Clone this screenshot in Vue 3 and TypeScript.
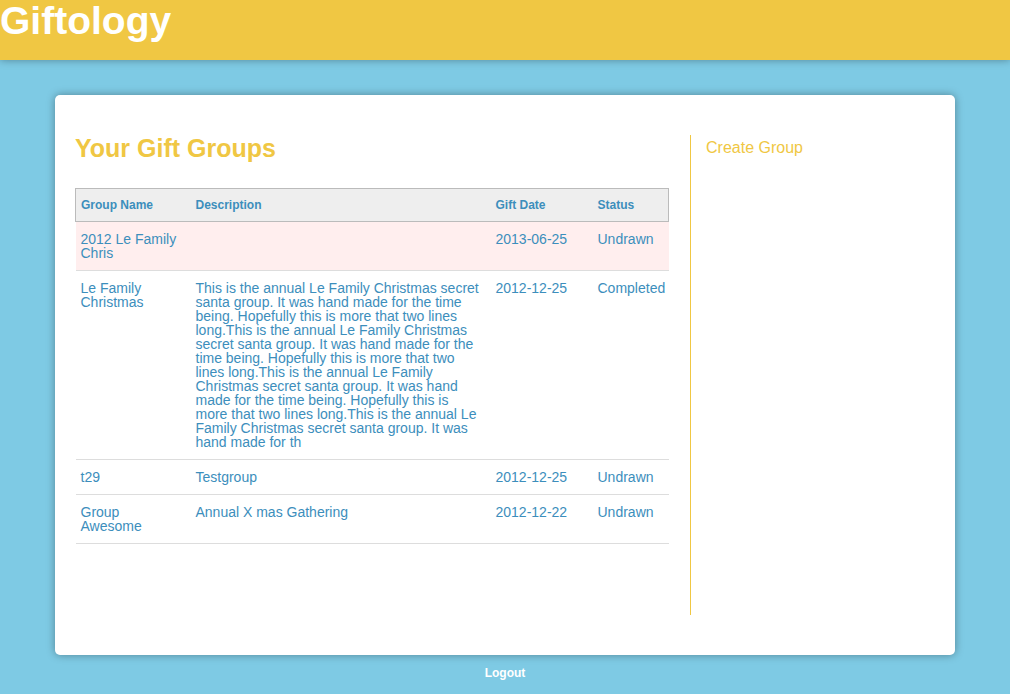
<script setup lang="ts">
interface GiftGroup {
  name: string
  description: string
  date: string
  status: string
  highlighted?: boolean
}

const blurb =
  'This is the annual Le Family Christmas secret santa group. It was hand made for the time being. Hopefully this is more that two lines long.'

const groups: GiftGroup[] = [
  { name: '2012 Le Family Chris', description: '', date: '2013-06-25', status: 'Undrawn', highlighted: true },
  {
    name: 'Le Family Christmas',
    description: blurb.repeat(3) + 'This is the annual Le Family Christmas secret santa group. It was hand made for th',
    date: '2012-12-25',
    status: 'Completed',
  },
  { name: 't29', description: 'Testgroup', date: '2012-12-25', status: 'Undrawn' },
  { name: 'Group Awesome', description: 'Annual X mas Gathering', date: '2012-12-22', status: 'Undrawn' },
]
</script>

<template>
  <div class="page">
    <header class="banner">
      <h1>Giftology</h1>
    </header>
    <main class="card">
      <section class="content">
        <h2>Your Gift Groups</h2>
        <table>
          <colgroup>
            <col class="col-name" />
            <col class="col-description" />
            <col class="col-date" />
            <col class="col-status" />
          </colgroup>
          <thead>
            <tr>
              <th scope="col">Group Name</th>
              <th scope="col">Description</th>
              <th scope="col">Gift Date</th>
              <th scope="col">Status</th>
            </tr>
          </thead>
          <tbody>
            <tr v-for="group in groups" :key="group.name" :class="{ highlighted: group.highlighted }">
              <td>{{ group.name }}</td>
              <td>{{ group.description }}</td>
              <td>{{ group.date }}</td>
              <td>{{ group.status }}</td>
            </tr>
          </tbody>
        </table>
      </section>
      <aside class="sidebar">
        <a href="#create">Create Group</a>
      </aside>
    </main>
    <footer class="footer">
      <a href="#logout">Logout</a>
    </footer>
  </div>
</template>

<style>
body {
  background: #7ecae4;
}
</style>

<style scoped>
.page {
  font-family: "Liberation Sans", Helvetica, Arial, sans-serif;
  font-size: 14px;
  line-height: 14px;
  color: #3c8ebc;
}

.banner {
  height: 60px;
  background: #f0c743;
  box-shadow: 0 0 8px rgba(0, 0, 0, 0.35);
}

h1 {
  margin: 0;
  color: #fff;
  font-size: 39px;
  line-height: 42px;
}

.card {
  display: flex;
  box-sizing: border-box;
  max-width: 900px;
  min-height: 560px;
  margin: 35px auto 0;
  padding: 40px 20px;
  background: #fff;
  border-radius: 5px;
  box-shadow: 0 0 8px rgba(0, 0, 0, 0.35);
}

.content {
  flex: 1;
  min-width: 0;
}

h2 {
  margin: 0 0 27px;
  color: #f0c743;
  font-size: 25px;
  line-height: 26px;
}

table {
  width: 100%;
  border-collapse: collapse;
  table-layout: fixed;
}

.col-name {
  width: 115px;
}

.col-date {
  width: 102px;
}

.col-status {
  width: 76px;
}

thead tr {
  background: #eee;
  border: 1px solid #bbb;
}

th {
  height: 32px;
  padding: 0 5px;
  font-size: 12px;
  text-align: left;
}

td {
  padding: 10px 8px 10px 5px;
  border-bottom: 1px solid #ddd;
  vertical-align: top;
}

.highlighted {
  background: #ffeeee;
}

.sidebar {
  box-sizing: border-box;
  width: 245px;
  margin-left: 21px;
  padding: 5px 15px;
  border-left: 1px solid #f0c743;
}

.sidebar a {
  color: #f0c743;
  font-size: 16px;
  line-height: 16px;
  text-decoration: none;
}

.footer {
  padding: 10px 0;
  text-align: center;
}

.footer a {
  color: #fff;
  font-size: 12px;
  font-weight: bold;
  text-decoration: none;
}
</style>
